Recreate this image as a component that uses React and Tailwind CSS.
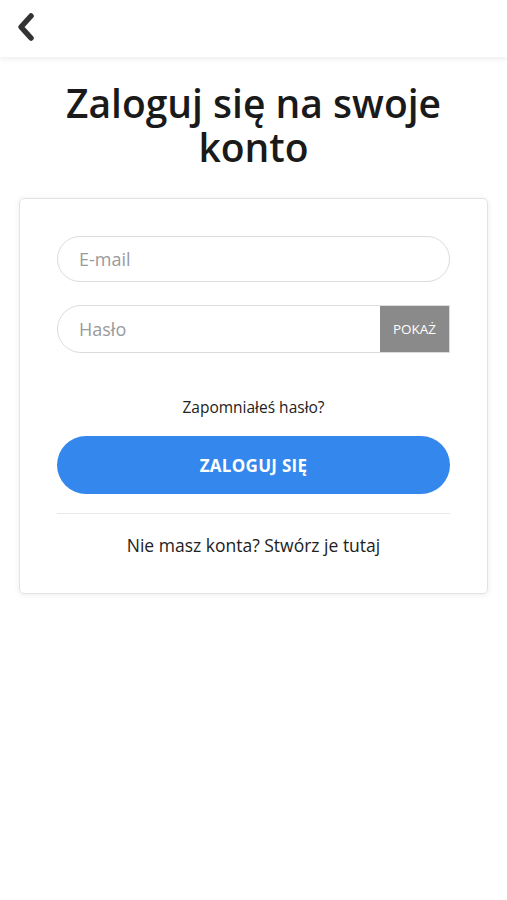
import React from "react";

export default function App() {
  return (
    <div className="min-h-[900px] bg-white" style={{ fontFamily: '"Open Sans", "Noto Sans", sans-serif' }}>
      <div className="h-[57px] flex items-center px-[14px] bg-white shadow-[0_2px_6px_rgba(0,0,0,0.08)] relative">
        <svg width="24" height="32" viewBox="0 0 24 32" className="mt-[-3px]">
          <path d="M17 5 L7 16 L17 27" fill="none" stroke="#333" strokeWidth="5.5" strokeLinecap="round" strokeLinejoin="round" />
        </svg>
      </div>
      <h1 className="text-center text-[39px] leading-[44px] font-[550] text-[#1a1a1a] mt-[24px] px-8">
        Zaloguj się na swoje konto
      </h1>
      <div className="mx-[19px] mt-[29px] border border-[#e3e3e3] rounded-[5px] shadow-[0_1px_6px_rgba(0,0,0,0.08)] px-[37px] pt-[37px] pb-[34px]">
        <div className="h-[46px] rounded-full border border-[#dcdcdc] flex items-center px-[21px] text-[18px] text-[#9a9a9a]">
          E-mail
        </div>
        <div className="mt-[23px] h-[48px] rounded-l-full border border-[#dcdcdc] flex items-stretch overflow-hidden">
          <div className="flex-1 flex items-center px-[21px] text-[18px] text-[#9a9a9a]">Hasło</div>
          <div className="w-[69px] bg-[#8a8a8a] text-white text-[13.5px] flex items-center justify-center">POKAŻ</div>
        </div>
        <div className="mt-[43px] text-center text-[15.5px] text-[#222]">Zapomniałeś hasło?</div>
        <div className="mt-[17px] h-[58px] rounded-full bg-[#3487ec] text-white font-bold text-[17px] flex items-center justify-center tracking-[0.3px]">
          ZALOGUJ SIĘ
        </div>
        <div className="mt-[19px] h-px bg-[#e8e8e8]"></div>
        <div className="mt-[18px] text-center text-[17.5px] text-[#222]">Nie masz konta? Stwórz je tutaj</div>
      </div>
    </div>
  );
}
